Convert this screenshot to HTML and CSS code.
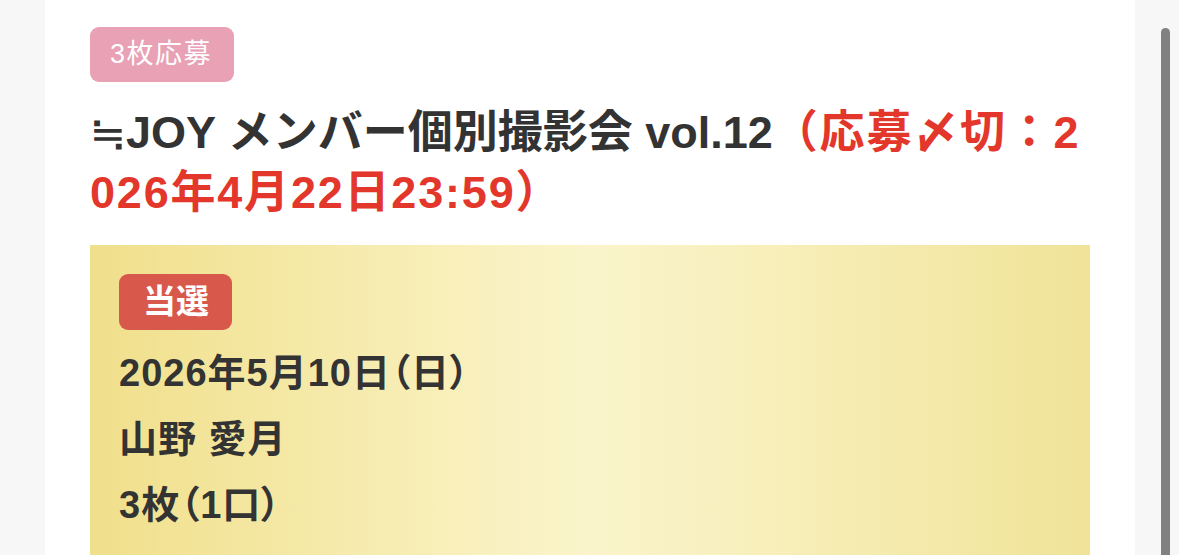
FILE: index.html
```html
<!DOCTYPE html>
<html lang="ja">
<head>
<meta charset="utf-8">
<title>≒JOY メンバー個別撮影会 vol.12</title>
<link rel="stylesheet" href="styles.css">
</head>
<body>
<div class="page">
  <main class="card">
    <div class="entry-tag">3枚応募</div>
    <h1 class="title">≒JOY メンバー個別撮影会 vol.12<span class="deadline">（応募〆切：2<br>026年4月22日23:59）</span></h1>
    <section class="result">
      <div class="result-tag">当選</div>
      <p class="result-line">2026年5月10日（日）</p>
      <p class="result-line">山野 愛月</p>
      <p class="result-line">3枚（1口）</p>
    </section>
  </main>
</div>
<div class="scrollbar"></div>
</body>
</html>
```

FILE: styles.css
```css
html, body {
  margin: 0;
  padding: 0;
  height: 100%;
  overflow: hidden;
}
body {
  background: #f7f7f7;
  font-family: "Liberation Sans", "Noto Sans CJK JP", sans-serif;
  color: #333333;
}
.page {
  padding: 0 44px 0 45px;
  height: 100%;
}
.card {
  background: #ffffff;
  height: 100%;
  padding: 27px 45px 0 45px;
  box-sizing: border-box;
}
.entry-tag {
  display: inline-block;
  background: #e8a1b5;
  color: #ffffff;
  font-size: 27px;
  line-height: 35px;
  padding: 10px 22px 10px 20px;
  border-radius: 9px;
  letter-spacing: 1.5px;
}
.title {
  margin: 21px 0 0 0;
  font-size: 45px;
  line-height: 60px;
  font-weight: bold;
  color: #333333;
  white-space: nowrap;
}
.deadline {
  color: #e3372b;
  letter-spacing: 1.8px;
}
.result {
  margin-top: 22px;
  padding: 29px 29px 0 29px;
  background: linear-gradient(90deg, #f0df8b 0%, #f8efb9 35%, #faf4cb 50%, #f7eeb8 70%, #f0e398 100%);
  height: 400px;
}
.result-tag {
  display: inline-block;
  background: #d9584c;
  color: #ffffff;
  font-size: 33px;
  font-weight: bold;
  line-height: 40px;
  padding: 8px 23px 8px 24px;
  border-radius: 9px;
}
.result-line {
  margin: 0;
  font-size: 38px;
  font-weight: bold;
  line-height: 66px;
  letter-spacing: 1px;
  font-feature-settings: "palt";
  color: #333333;
}
.result-tag + .result-line {
  margin-top: 10px;
}
.scrollbar {
  position: fixed;
  top: 28px;
  bottom: -10px;
  left: 1161px;
  width: 9px;
  background: #818181;
  border-radius: 5px;
}
```
